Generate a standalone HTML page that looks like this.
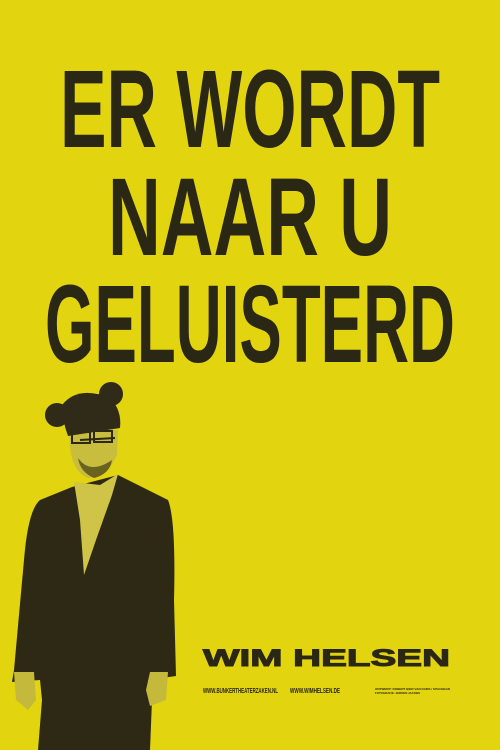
<!DOCTYPE html>
<html><head><meta charset="utf-8"><style>
html,body{margin:0;padding:0;background:#e2d40f;}
svg{display:block}
</style></head><body>
<svg width="500" height="750" viewBox="0 0 500 750" xmlns="http://www.w3.org/2000/svg">
<rect width="500" height="750" fill="#e2d40f"/>
<g fill="#2b2715" font-family="Liberation Sans, sans-serif" font-weight="bold">
<text x="60" y="147" font-size="110" textLength="380" lengthAdjust="spacingAndGlyphs">ER WORDT</text>
<text x="108" y="255" font-size="110" textLength="284" lengthAdjust="spacingAndGlyphs">NAAR U</text>
<text x="45" y="362" font-size="110" textLength="410" lengthAdjust="spacingAndGlyphs">GELUISTERD</text>
<text x="203" y="666" font-size="24" font-weight="900" textLength="247" lengthAdjust="spacingAndGlyphs" stroke="#2b2715" stroke-width="1">WIM HELSEN</text>
<text x="203" y="693" font-size="7" textLength="75" lengthAdjust="spacingAndGlyphs">WWW.BUNKERTHEATERZAKEN.NL</text>
<text x="290" y="693" font-size="7" textLength="50" lengthAdjust="spacingAndGlyphs">WWW.WIMHELSEN.DE</text>
<text x="375" y="690" font-size="3" textLength="75" lengthAdjust="spacingAndGlyphs">ONTWERP: ROBERT BIER VAN DAMS / SPACEBAR</text>
<text x="375" y="694" font-size="3" textLength="45" lengthAdjust="spacingAndGlyphs">FOTOGRAFIE: JEROEN JACOBS</text>
</g>
<!-- person -->
<g>
<!-- suit -->
<path d="M72 487 L40 500 Q28 510 24 560 L14 670 L12 682 L40 680 L42 700 L38 750 L150 750 L152 700 L148 680 L176 676 L174 600 Q176 520 168 500 L118 475 Z" fill="#2d2914"/>
<!-- shirt -->
<path d="M74 482 L80 520 L84 575 L96 540 L112 495 L118 474 L100 485 Z" fill="#cfc447"/>
<!-- cuffs/hands -->
<path d="M14 672 L34 672 L36 700 L28 710 L16 700 Z" fill="#c4b93a"/>
<path d="M150 672 L168 672 L166 700 L150 706 L146 690 Z" fill="#c4b93a"/>
<!-- neck/face -->
<path d="M70 432 Q68 470 88 478 Q108 476 117 455 L118 430 Z" fill="#c8bd3c"/>
<path d="M80 440 L115 438" stroke="#2b2715" stroke-width="2" fill="none"/>
<rect x="72" y="432" width="18" height="11" fill="none" stroke="#2b2715" stroke-width="2"/>
<rect x="94" y="431" width="18" height="11" fill="none" stroke="#2b2715" stroke-width="2"/>
<!-- beard -->
<path d="M78 458 Q90 475 112 460 Q110 474 94 478 Q80 472 78 458Z" fill="#6a6220"/>
<!-- hat -->
<path d="M62 405 Q78 385 110 398 Q122 410 120 428 L68 436 Q62 420 62 405 Z" fill="#2f2b18"/>
<circle cx="57" cy="415" r="12" fill="#2f2b18"/>
<circle cx="111" cy="394" r="12" fill="#2f2b18"/>
</g>
</svg>
</body></html>
